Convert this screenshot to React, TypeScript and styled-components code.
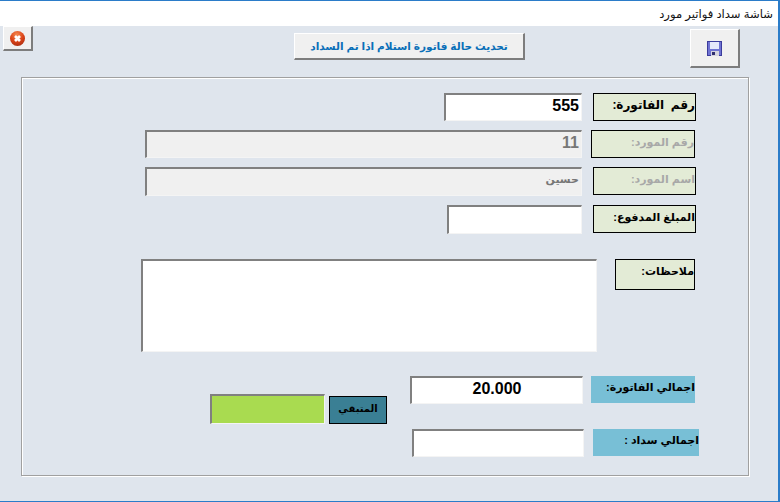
import React from 'react';
import styled, { createGlobalStyle } from 'styled-components';

const GlobalStyle = createGlobalStyle`
  html, body {
    margin: 0;
    padding: 0;
    background: #ffffff;
  }
`;

const Window = styled.div`
  width: 780px;
  height: 502px;
  box-sizing: border-box;
  border-top: 1px solid #2b7cc9;
  border-bottom: 1px solid #2b7cc9;
  border-right: 2px solid #2b7cc9;
  display: flex;
  flex-direction: column;
  font-family: "Liberation Sans", "DejaVu Sans", sans-serif;
  overflow: hidden;
`;

const TitleBar = styled.div`
  height: 25px;
  flex: none;
  background: #ffffff;
  color: #111111;
  direction: rtl;
  font-size: 11.6px;
  line-height: 25px;
  padding-right: 5px;
`;

const Body = styled.div`
  flex: 1;
  background: #dfe5ed;
`;

const Toolbar = styled.div`
  height: 51px;
  display: flex;
  align-items: flex-start;
`;

const BevelButton = styled.button<{ $w: number; $h: number; $top: number; $left: number }>`
  width: ${(p) => p.$w}px;
  height: ${(p) => p.$h}px;
  margin-top: ${(p) => p.$top}px;
  margin-left: ${(p) => p.$left}px;
  flex: none;
  padding: 0;
  box-sizing: border-box;
  background: #f0f0f0;
  border: 1px solid #ffffff;
  border-right: 2px solid #7d7d7d;
  border-bottom: 2px solid #7d7d7d;
  display: flex;
  align-items: center;
  justify-content: center;
  font-family: inherit;
`;

const UpdateText = styled.span`
  color: #0a6fb8;
  font-size: 10.5px;
  font-weight: 700;
  direction: rtl;
  white-space: nowrap;
`;

const Frame = styled.div`
  margin-left: 21px;
  width: 728px;
  height: 399px;
  box-sizing: border-box;
  border: 1px solid #a0a0a0;
  box-shadow: 1px 1px 0 #ffffff, inset 1px 1px 0 #ffffff;
  display: flex;
  flex-direction: column;
`;

const Row = styled.div<{ $top: number; $right: number; $gap: number }>`
  display: flex;
  justify-content: flex-end;
  align-items: flex-start;
  margin-top: ${(p) => p.$top}px;
  padding-right: ${(p) => p.$right}px;
  gap: ${(p) => p.$gap}px;
`;

const Field = styled.div<{ $w: number; $h?: number; $bg?: string; $muted?: boolean; $center?: boolean; $size?: number }>`
  width: ${(p) => p.$w}px;
  height: ${(p) => p.$h ?? 28}px;
  flex: none;
  box-sizing: border-box;
  background: ${(p) => p.$bg ?? '#ffffff'};
  border-style: solid;
  border-width: 2px 1px 1px 2px;
  border-color: #808080 #f4f4f4 #f4f4f4 #808080;
  color: ${(p) => (p.$muted ? '#777777' : '#000000')};
  font-size: ${(p) => p.$size ?? 16}px;
  font-weight: 700;
  line-height: 21px;
  padding: 0 2px;
  direction: ${(p) => (p.$center ? 'ltr' : 'rtl')};
  text-align: ${(p) => (p.$center ? 'center' : 'right')};
  white-space: nowrap;
`;

const Label = styled.div<{ $w: number; $h?: number; $bg?: string; $plain?: boolean; $muted?: boolean; $center?: boolean; $size?: number }>`
  width: ${(p) => p.$w}px;
  height: ${(p) => p.$h ?? 28}px;
  flex: none;
  box-sizing: border-box;
  background: ${(p) => p.$bg ?? '#e3ebd6'};
  border: ${(p) => (p.$plain ? '0' : '1px solid #000000')};
  color: ${(p) => (p.$muted ? '#a8a8a8' : '#000000')};
  direction: rtl;
  font-size: ${(p) => p.$size ?? 11}px;
  font-weight: 700;
  line-height: 23px;
  text-align: ${(p) => (p.$center ? 'center' : 'right')};
  white-space: pre;
  overflow: hidden;
`;

const Totals = styled.div`
  display: flex;
  justify-content: flex-end;
  align-items: flex-start;
  margin-top: 24px;
`;

const Remaining = styled.div`
  display: flex;
  align-items: flex-end;
  gap: 4px;
  margin-top: 18px;
  margin-right: 23px;
`;

const TotalRows = styled.div`
  display: flex;
  flex-direction: column;
  padding-right: 49px;
`;

const CloseIcon = () => (
  <svg width="15" height="15" viewBox="0 0 15 15">
    <defs>
      <radialGradient id="closeBall" cx="45%" cy="25%" r="80%">
        <stop offset="0%" stopColor="#f58a50" />
        <stop offset="55%" stopColor="#dc4418" />
        <stop offset="100%" stopColor="#a82c10" />
      </radialGradient>
    </defs>
    <circle cx="7.5" cy="7.5" r="7.5" fill="url(#closeBall)" />
    <path d="M5 5 L10 10 M10 5 L5 10" stroke="#ffffff" strokeWidth="2.7" />
  </svg>
);

const SaveIcon = () => (
  <svg width="15" height="15" viewBox="0 0 15 15">
    <rect x="0.5" y="0.5" width="14" height="14" fill="#6f73d2" stroke="#3c3c9c" />
    <rect x="3" y="1" width="9" height="7" fill="#e6e9fa" />
    <rect x="4" y="10" width="8" height="5" fill="#d4d4de" />
    <rect x="5" y="11" width="3" height="3" fill="#2e2e70" />
  </svg>
);

const App = () => {
  return (
    <>
      <GlobalStyle />
      <Window>
        <TitleBar>شاشة سداد فواتير مورد</TitleBar>
        <Body>
          <Toolbar>
            <BevelButton $w={30} $h={25} $top={0} $left={3}>
              <CloseIcon />
            </BevelButton>
            <BevelButton $w={231} $h={27} $top={7} $left={261}>
              <UpdateText>تحديث حالة فاتورة استلام اذا تم السداد</UpdateText>
            </BevelButton>
            <BevelButton $w={50} $h={39} $top={3} $left={165}>
              <SaveIcon />
            </BevelButton>
          </Toolbar>
          <Frame>
            <Row $top={15} $right={52} $gap={11}>
              <Field $w={138}>555</Field>
              <Label $w={103} $size={12}>{'رقم  الفاتورة:'}</Label>
            </Row>
            <Row $top={9} $right={53} $gap={9}>
              <Field $w={437} $bg="#f0f0f0" $muted>11</Field>
              <Label $w={104} $muted>رقم المورد:</Label>
            </Row>
            <Row $top={9} $right={52} $gap={11}>
              <Field $w={437} $h={29} $bg="#f0f0f0" $muted $size={11}>حسين</Field>
              <Label $w={103} $muted>اسم المورد:</Label>
            </Row>
            <Row $top={9} $right={52} $gap={11}>
              <Field $w={135} $h={29} />
              <Label $w={103}>المبلغ المدفوع:</Label>
            </Row>
            <Row $top={25} $right={53} $gap={18}>
              <Field $w={456} $h={93} />
              <Label $w={80} $h={31}>ملاحظات:</Label>
            </Row>
            <Totals>
              <Remaining>
                <Field $w={115} $h={30} $bg="#a9db50" />
                <Label $w={58} $bg="#3a7f94" $center $size={10}>المتبقي</Label>
              </Remaining>
              <TotalRows>
                <Row $top={0} $right={4} $gap={8}>
                  <Field $w={173} $center>20.000</Field>
                  <Label $w={104} $h={27} $bg="#78bfd6" $plain>اجمالي الفاتورة:</Label>
                </Row>
                <Row $top={25} $right={0} $gap={9}>
                  <Field $w={172} />
                  <Label $w={106} $h={27} $bg="#78bfd6" $plain>اجمالي سداد :</Label>
                </Row>
              </TotalRows>
            </Totals>
          </Frame>
        </Body>
      </Window>
    </>
  );
};

export default App;
